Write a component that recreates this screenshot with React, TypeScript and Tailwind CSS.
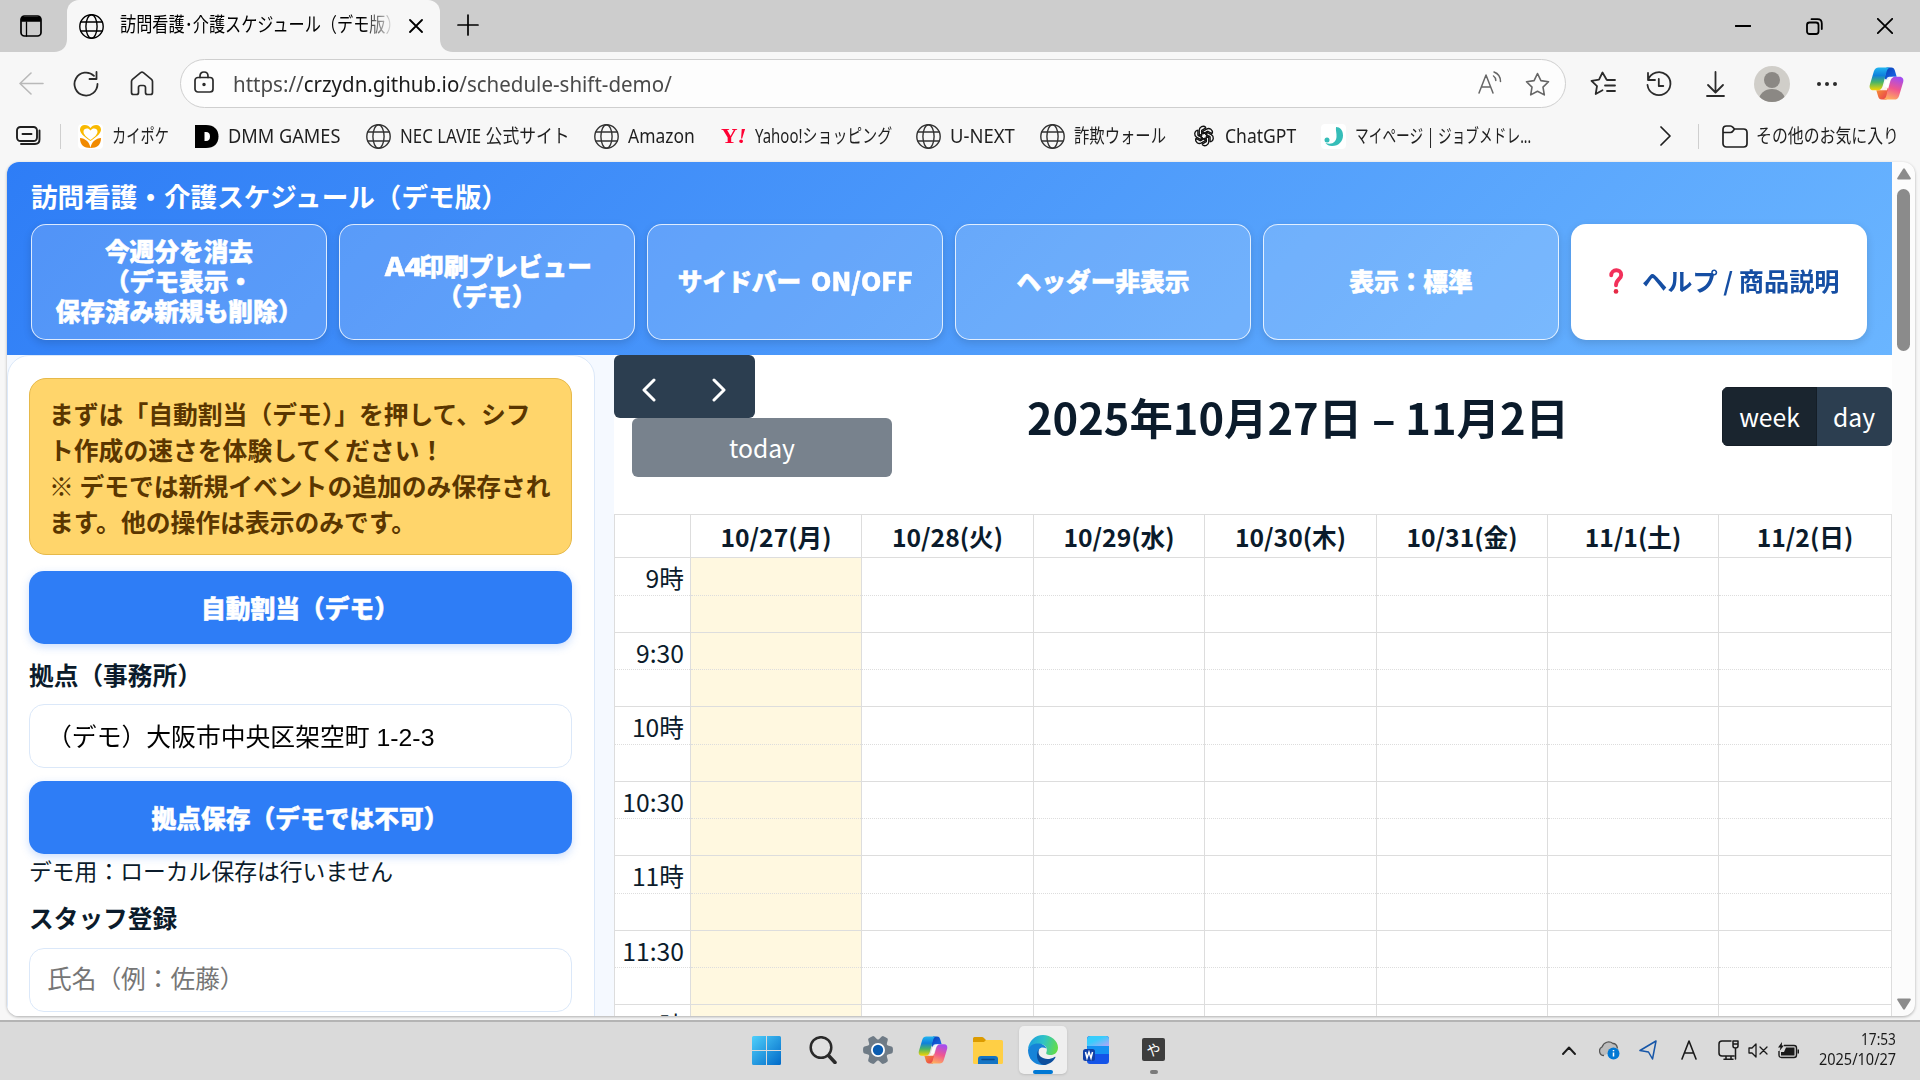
import { useLayoutEffect, useRef } from "react";
import type { ReactNode } from "react";

/** Text stretched or condensed horizontally to a given width. */
function Fit({ w, className = "", children }: { w: number; className?: string; children: ReactNode }) {
  const ref = useRef<HTMLSpanElement>(null);
  useLayoutEffect(() => {
    const el = ref.current;
    if (el) el.style.transform = `scaleX(${w / el.offsetWidth})`;
  }, [w]);
  return (
    <span className={`block shrink-0 ${className}`} style={{ width: w }}>
      <span ref={ref} className="inline-block origin-left whitespace-nowrap">
        {children}
      </span>
    </span>
  );
}

const stroke = { fill: "none", stroke: "currentColor", strokeLinecap: "round", strokeLinejoin: "round" } as const;

function Globe({ className = "size-[25px]" }: { className?: string }) {
  return (
    <svg viewBox="0 0 25 25" className={`shrink-0 text-[#333] ${className}`} {...stroke} strokeWidth={1.4}>
      <circle cx="12.5" cy="12.5" r="11.7" />
      <ellipse cx="12.5" cy="12.5" rx="5.6" ry="11.7" />
      <path d="M1.8 8h21.4M1.8 17h21.4" />
    </svg>
  );
}

function Copilot({ className, id }: { className: string; id: string }) {
  return (
    <svg viewBox="0 0 36 34" className={`shrink-0 ${className}`}>
      <defs>
        <linearGradient id={`${id}a`} x1="0" y1="0" x2="0" y2="1">
          <stop offset="0" stopColor="#21b5f0" />
          <stop offset=".35" stopColor="#0f80dc" />
          <stop offset=".65" stopColor="#4bb565" />
          <stop offset="1" stopColor="#f8d500" />
        </linearGradient>
        <linearGradient id={`${id}b`} x1=".6" y1="0" x2=".3" y2="1">
          <stop offset="0" stopColor="#a44cf0" />
          <stop offset=".5" stopColor="#f0568f" />
          <stop offset="1" stopColor="#ffb15c" />
        </linearGradient>
        <linearGradient id={`${id}c`} x1="0" y1="0" x2="1" y2="1">
          <stop offset="0" stopColor="#0a3fb5" />
          <stop offset="1" stopColor="#1b6ef0" />
        </linearGradient>
        <linearGradient id={`${id}d`} x1="0" y1="0" x2="1" y2="1">
          <stop offset="0" stopColor="#f7a032" />
          <stop offset="1" stopColor="#e8364f" />
        </linearGradient>
      </defs>
      <path d="M18 .5h5c2 0 3 1 3.600 3l1.900 6.500H25c-3 0-4.500 1.500-5.300 4L16 12z" fill={`url(#${id}c)`} />
      <path d="M18 33.500h-5c-2 0-3-1-3.600-3L7.500 24H11c3 0 4.500-1.500 5.300-4l3.700 2z" fill={`url(#${id}d)`} />
      <path d="M10 .5h12.500c-2 0-3.600 1.500-4.300 4l-4 14.500c-.8 3.300-2.500 5-5.500 5H4.500C1.500 24 0 21.500.8 18.500L5 4.500C5.800 1.800 7.500.5 10 .5z" fill={`url(#${id}a)`} />
      <path d="M26 33.500H13.500c2 0 3.600-1.500 4.300-4l4-14.500c.8-3.300 2.500-5 5.500-5h4.200c3 0 4.500 2.500 3.700 5.500L31 29.500c-.8 2.700-2.500 4-5 4z" fill={`url(#${id}b)`} />
      <path d="M21 10h5.500c-3 0-4.500 2-5.300 5l-2.700 9H11.500c2.500-.5 3.500-2 4.200-4.500l2-6.500c.6-2 1.500-3 3.300-3z" fill="#fff" fillOpacity=".9" />
    </svg>
  );
}

function TitleBar() {
  return (
    <div className="flex h-[52px] items-center bg-[#cdcdcd] text-black">
      <svg viewBox="0 0 22 22" className="ml-5 size-[22px] shrink-0" {...stroke} strokeWidth={1.7}>
        <rect x="1" y="1" width="20" height="20" rx="3.500" />
        <path d="M2 2.500h18v3.500h-18z" fill="currentColor" />
        <path d="M6.500 7v14" strokeWidth={1.300} />
      </svg>
      <svg viewBox="0 0 13 13" className="ml-[12px] size-[13px] shrink-0 self-end">
        <path d="M13 0v13H0C8 13 13 8 13 0z" fill="#f7f7f7" />
      </svg>
      <div className="flex h-[52px] w-[373px] shrink-0 items-center rounded-t-[12px] bg-[#f7f7f7] pl-3">
        <Globe className="size-[25px] text-black" />
        <div className="ml-4 w-[275px] overflow-hidden pb-0.5 [mask-image:linear-gradient(to_right,black_88%,transparent)]">
          <Fit w={282} className="text-[20px] leading-[30px]">訪問看護･介護スケジュール（デモ版）</Fit>
        </div>
        <svg viewBox="0 0 14 14" className="ml-[14px] size-[14px]" {...stroke} strokeWidth={1.8}>
          <path d="M1 1l12 12M13 1L1 13" />
        </svg>
      </div>
      <svg viewBox="0 0 13 13" className="size-[13px] shrink-0 self-end">
        <path d="M0 0v13h13C5 13 0 8 0 0z" fill="#f7f7f7" />
      </svg>
      <svg viewBox="0 0 22 22" className="mb-[3px] ml-[4px] size-[22px]" {...stroke} strokeWidth={1.7}>
        <path d="M11 1v20M1 11h20" />
      </svg>
      <div className="ml-auto flex items-center pr-[27px]">
        <svg viewBox="0 0 16 16" className="mr-[55px] size-4" {...stroke} strokeWidth={1.8}>
          <path d="M.5 8h15" />
        </svg>
        <svg viewBox="0 0 17 17" className="mr-[54px] size-[17px]" {...stroke} strokeWidth={1.8}>
          <rect x="1" y="4.500" width="11.500" height="11.500" rx="2.500" />
          <path d="M5.500 1.200h6c3 0 4.300 1.500 4.300 4.300v5.500" />
        </svg>
        <svg viewBox="0 0 16 16" className="size-4" {...stroke} strokeWidth={1.8}>
          <path d="M.8.8l14.400 14.400M15.200.8L.8 15.200" />
        </svg>
      </div>
    </div>
  );
}

const starPath = "M12.500 1.500l3.400 7.100 7.600 1.100-5.500 5.400 1.300 7.800-6.800-3.700-6.800 3.700L7 15.100 1.500 9.700l7.600-1.100z";

function Toolbar() {
  return (
    <div className="flex h-[63px] items-center bg-[#f7f7f7] text-[#2b2b2b]">
      <svg viewBox="0 0 25 23" className="ml-[19px] h-[23px] w-[25px] shrink-0 text-[#b9b9b9]" {...stroke} strokeWidth={1.6}>
        <path d="M24 11.500H1M12 1L1 11.500 12 22" />
      </svg>
      <svg viewBox="0 0 26 26" className="ml-[29px] size-[26px] shrink-0" {...stroke} strokeWidth={1.8}>
        <path d="M24.500 13A11.500 11.500 0 1 1 21 4.800M23.500 1v7h-7" />
      </svg>
      <svg viewBox="0 0 24 25" className="ml-[31px] h-[25px] w-6 shrink-0" {...stroke} strokeWidth={1.7}>
        <path d="M1.500 10.500c0-1 .3-1.600 1-2.200L10.600 1.700c.9-.7 1.900-.7 2.800 0l8.100 6.600c.7.600 1 1.200 1 2.200v11c0 1.200-.8 2-2 2h-3c-1.200 0-2-.8-2-2v-5c0-1.200-.8-2-2-2h-3c-1.200 0-2 .8-2 2v5c0 1.200-.8 2-2 2h-3c-1.200 0-2-.8-2-2z" />
      </svg>
      <div className="ml-[26px] flex h-[49px] w-[1386px] shrink-0 items-center rounded-full border-[1.500px] border-[#cfcfcf] bg-[#fdfdfd]">
        <svg viewBox="0 0 20 22" className="mb-[3px] ml-[13px] h-[22px] w-5 shrink-0" {...stroke} strokeWidth={1.7}>
          <rect x="1" y="6.500" width="18" height="14.500" rx="3" />
          <path d="M6 6.500V5c0-2.600 1.500-4 4-4s4 1.400 4 4v1.500" />
          <circle cx="10" cy="13.500" r=".9" fill="currentColor" />
        </svg>
        <Fit w={439} className="mb-0.5 ml-[19px] text-[22px] leading-[30px] text-[#4a4a4a]">
          https://<span className="text-[#1b1b1b]">crzydn.github.io</span>/schedule-shift-demo/
        </Fit>
        <svg viewBox="0 0 24 23" className="mb-[3px] ml-auto h-[23px] w-6 shrink-0 text-[#666]" {...stroke} strokeWidth={1.5}>
          <path d="M1 22L8 4l7 18M3.500 16h9M15.500 5c1.500 1 2.300 2.500 2.300 4.500M16 1c4 1.500 6.500 5 6.500 9.500" />
        </svg>
        <svg viewBox="0 0 25 24" className="mr-[15px] ml-[23px] h-6 w-[25px] shrink-0 text-[#666]" {...stroke} strokeWidth={1.6}>
          <path d={starPath} />
        </svg>
      </div>
      <svg viewBox="0 0 26 25" className="ml-6 h-[25px] w-[26px] shrink-0" {...stroke} strokeWidth={1.8}>
        <path d="M16.500 8.500L12.500 1.500 9 8.700 1.500 9.800 7 15.100 5.700 23l6.800-3.700M17 9h8M15 14.500h10M17 20h8" />
      </svg>
      <svg viewBox="0 0 26 26" className="ml-[30px] size-[26px] shrink-0" {...stroke} strokeWidth={1.8}>
        <path d="M2 9A11.500 11.500 0 1 1 1.500 14M2 2v7h7M12.800 8v7h4.500" />
      </svg>
      <svg viewBox="0 0 19 26" className="ml-[34px] h-[26px] w-[19px] shrink-0" {...stroke} strokeWidth={1.8}>
        <path d="M9.500 1v20M2 14l7.500 7.500L17 14M1 25h17" />
      </svg>
      <svg viewBox="0 0 36 36" className="ml-[29px] size-9 shrink-0">
        <clipPath id="avatar"><circle cx="18" cy="18" r="18" /></clipPath>
        <g clipPath="url(#avatar)">
          <path d="M0 0h36v36H0z" fill="#d0cec9" />
          <circle cx="18" cy="14" r="8" fill="#8b8884" />
          <ellipse cx="18" cy="34" rx="13" ry="11" fill="#8b8884" />
        </g>
      </svg>
      <svg viewBox="0 0 22 6" className="ml-[26px] h-1.5 w-[22px] shrink-0" fill="currentColor">
        <circle cx="3" cy="3" r="2" /><circle cx="11" cy="3" r="2" /><circle cx="19" cy="3" r="2" />
      </svg>
      <Copilot id="bar" className="ml-[31px] h-[33px] w-[35px]" />
    </div>
  );
}

function Bookmark({ w, tw, icon, label }: { w: number; tw: number; icon: ReactNode; label: string }) {
  return (
    <div className="flex shrink-0 items-center" style={{ width: w }}>
      <div className="flex w-[25px] shrink-0 items-center justify-center">{icon}</div>
      <Fit w={tw} className="ml-[9px] text-[19px] leading-[28px]">{label}</Fit>
    </div>
  );
}

const kaipoke = (
  <svg viewBox="0 0 25 25" className="size-[25px] rounded bg-white">
    <path d="M12.500 17C5 12 2 9 2 5.500 2 3 4 1 6.800 1c2.500 0 4.500 1 5.700 3C13.700 2 15.700 1 18.200 1 21 1 23 3 23 5.500c0 3.500-3 6.500-10.500 11.500z" fill="#f9b900" />
    <path d="M12.500 16C7.500 12.500 5.500 10 5.500 7.500c0-3.400 5-4.300 7-1 2-3.300 7-2.400 7 1 0 2.500-2 5-7 8.500z" fill="#fff" />
    <path d="M2 14c5 .5 9.500 3.500 10.500 10C6 24 2 21 2 14zM23 14c-5 .5-9.500 3.500-10.500 10C19 24 23 21 23 14z" fill="#f18a00" />
  </svg>
);
const dmm = (
  <svg viewBox="0 0 24 23" className="h-[23px] w-6">
    <path d="M0 0h11c8 0 12.500 4.500 12.500 11.500S19 23 11 23H0z" fill="#000" />
    <path d="M9.500 7h1.500c2.800 0 4 1.700 4 4.500S13.800 16 11 16H9.500z" fill="#fff" />
  </svg>
);
const yahoo = (
  <Fit w={25} className="font-['Liberation_Serif',serif] text-[22px] leading-[22px] font-bold text-[#ff0033]">
    Y<i>!</i>
  </Fit>
);
const chatgpt = (
  <svg viewBox="0 0 24 24" className="size-[22px]" fill="none" stroke="#111" strokeWidth={1.5}>
    {[0, 60, 120, 180, 240, 300].map((a) => (
      <path key={a} transform={`rotate(${a} 12 12)`} d="M12 8.500L6.800 11.500V5.800A4.300 4.300 0 0 1 14 2.600M14.500 2.900L9.500 5.800v6" />
    ))}
  </svg>
);
const jobmed = (
  <svg viewBox="0 0 25 25" className="size-[25px] rounded bg-white">
    <path d="M15 3c4 0 7 3 7 8.500S18 22 11 22c-3 0-5-1-6.500-3 7 2 10.500-1 11-6 .3-4-1-7-.5-10z" fill="#35bdb8" />
    <circle cx="6" cy="16" r="2.500" fill="#35bdb8" />
  </svg>
);

function Bookmarks() {
  return (
    <div className="flex h-[47px] items-center bg-[#f7f7f7] pb-[5px] text-[#1f1f1f]">
      <svg viewBox="0 0 25 20" className="ml-4 h-5 w-[25px] shrink-0" {...stroke} strokeWidth={1.900}>
        <rect x="1" y="1" width="20" height="14" rx="3.500" />
        <path d="M6.500 8h9M23.500 4.500v9c0 3-1.500 4.500-4.500 4.500H5" />
      </svg>
      <div className="ml-[19px] h-[25px] w-px shrink-0 bg-[#cfcfcf]" />
      <div className="ml-[17px] flex">
        <Bookmark w={116} tw={57} icon={kaipoke} label="カイポケ" />
        <Bookmark w={172} tw={112} icon={dmm} label="DMM GAMES" />
        <Bookmark w={228} tw={170} icon={<Globe />} label="NEC LAVIE 公式サイト" />
        <Bookmark w={127} tw={67} icon={<Globe />} label="Amazon" />
        <Bookmark w={195} tw={137} icon={yahoo} label="Yahoo!ショッピング" />
        <Bookmark w={124} tw={65} icon={<Globe />} label="U-NEXT" />
        <Bookmark w={151} tw={92} icon={<Globe />} label="詐欺ウォール" />
        <Bookmark w={130} tw={71} icon={chatgpt} label="ChatGPT" />
        <Bookmark w={240} tw={176} icon={jobmed} label="マイページ | ジョブメドレ..." />
      </div>
      <svg viewBox="0 0 11 20" className="ml-auto h-5 w-[11px] shrink-0" {...stroke} strokeWidth={1.700}>
        <path d="M1 1l9 9-9 9" />
      </svg>
      <div className="ml-[27px] h-[25px] w-px bg-[#cfcfcf]" />
      <svg viewBox="0 0 26 23" className="ml-[23px] h-[23px] w-[26px] shrink-0" {...stroke} strokeWidth={1.700}>
        <path d="M1 7V4.500C1 2.500 2.200 1 4.500 1h4c1 0 1.600.4 2.200 1.200L12.500 4h9C24 4 25 5.500 25 7.500v11c0 2-1.200 3.500-3.500 3.500h-17C2.200 22 1 20.500 1 18.500zM1 7.500h7.500c1 0 1.700-.3 2.300-1.200L12.500 4" />
      </svg>
      <Fit w={143} className="mr-[21px] ml-[8px] text-[19px] leading-[28px]">その他のお気に入り</Fit>
    </div>
  );
}

const glassButton =
  "flex w-[296px] flex-col items-center justify-center rounded-[15px] border border-white/80 bg-white/[0.16] pb-[4px] text-center text-[24.700px] leading-[30px] text-white shadow-[0_3px_8px_rgba(0,0,0,0.14)] font-black [-webkit-text-stroke:0.5px_white]";

function AppHeader() {
  return (
    <div className="h-[193px] shrink-0 bg-[linear-gradient(135deg,#2e7df6,#6ab5ff)] px-6 pt-[15px]">
      <div className="h-[47px] text-[26.600px] leading-[38px] font-bold text-white">訪問看護・介護スケジュール（デモ版）</div>
      <div className="flex h-[116px] gap-3">
        <div className={glassButton}>
          <span>今週分を消去</span><span>（デモ表示・</span><span>保存済み新規も削除）</span>
        </div>
        <div className={glassButton}>
          <div className="flex"><Fit w={37}>A4</Fit>印刷プレビュー</div>
          <span>（デモ）</span>
        </div>
        <div className={glassButton}>
          <div className="flex pr-[2px]">サイドバー<Fit w={102} className="ml-[7px]">ON/OFF</Fit></div>
        </div>
        <div className={glassButton}>ヘッダー非表示</div>
        <div className={glassButton}>表示：標準</div>
        <div className="flex w-[296px] items-center rounded-[15px] bg-white pb-[3px] pl-[37px] text-[24.700px] font-bold text-[#154ea3] shadow-[0_3px_8px_rgba(0,0,0,0.14)]">
          <svg viewBox="0 0 16 30" className="mr-[18px] h-[26px] w-4">
            <path d="M2.500 8.500C2.500 1 14 .5 14 8c0 5-6 5-6 12" fill="none" stroke="#f2305a" strokeWidth={4.500} strokeLinecap="round" />
            <circle cx="8" cy="27" r="2.700" fill="#e52a45" />
          </svg>
          <Fit w={198}>ヘルプ / 商品説明</Fit>
        </div>
      </div>
    </div>
  );
}

const blueButton =
  "flex h-[73px] shrink-0 items-center justify-center rounded-[15px] bg-[#2e7df6] pr-[1px] text-[24.750px] text-white shadow-[0_3px_8px_rgba(46,125,246,0.25)] font-black [-webkit-text-stroke:0.5px_white]";
const field =
  "flex h-[64px] shrink-0 items-center rounded-[15px] border border-[#dbe8f9] bg-white px-[17px] font-['Liberation_Sans','Noto_Sans_CJK_JP',sans-serif] text-[24.700px]";

function Sidebar() {
  return (
    <div className="h-[720px] w-[588px] shrink-0 rounded-t-[22px] border border-[#dbe8f9] bg-white pt-[22px] pr-[22px] pl-[21px]">
      <div className="flex h-full flex-col">
        <div className="h-[177px] shrink-0 rounded-[17px] border border-[#e6b94a] bg-[#ffd56b] pt-[16px] pl-[19px] text-[24.800px] leading-[36px] font-bold whitespace-nowrap text-[#5a3600]">
          <div>まずは「自動割当（デモ）」を押して、シフ</div>
          <div>ト作成の速さを体験してください！</div>
          <div>※ デモでは新規イベントの追加のみ保存され</div>
          <div>ます。他の操作は表示のみです。</div>
        </div>
        <div className={`mt-4 ${blueButton}`}>自動割当（デモ）</div>
        <div className="mt-[12px] text-[24.700px] leading-[36px] font-bold">拠点（事務所）</div>
        <div className={`mt-[12px] pt-[3px] text-black ${field}`}>
          <Fit w={387}>（デモ）大阪市中央区架空町 1-2-3</Fit>
        </div>
        <div className={`mt-[13px] ${blueButton}`}>拠点保存（デモでは不可）</div>
        <div className="text-[22.800px] leading-[34px]">デモ用：ローカル保存は行いません</div>
        <div className="mt-[11px] text-[24.700px] leading-[36px] font-bold">スタッフ登録</div>
        <div className={`mt-[13px] text-[#767676] ${field}`}>氏名（例：佐藤）</div>
      </div>
    </div>
  );
}

const days = ["10/27(月)", "10/28(火)", "10/29(水)", "10/30(木)", "10/31(金)", "11/1(土)", "11/2(日)"];
const times = ["9時", "9:30", "10時", "10:30", "11時", "11:30", "12時"];
const cols = "grid grid-cols-[77px_171px_172px_171px_172px_171px_171px_173px]";

function Calendar() {
  return (
    <div className="w-[1278px] shrink-0 overflow-hidden bg-white">
      <div className="flex h-[159px] items-start justify-between">
        <div className="w-[278px]">
          <div className="flex h-[63px] w-[141px] items-center rounded-[6px] bg-[#2c3e50] pt-[6px] pl-[28px] text-white">
            <svg viewBox="0 0 14 24" className="h-6 w-[14px]" {...stroke} strokeWidth={3}><path d="M12 2L2 12l10 10" /></svg>
            <svg viewBox="0 0 14 24" className="ml-[56px] h-6 w-[14px]" {...stroke} strokeWidth={3}><path d="M2 2l10 10L2 22" /></svg>
          </div>
          <div className="ml-[18px] flex h-[59px] w-[260px] items-center justify-center rounded-[6px] bg-[#78828d] text-[24.700px] text-white">today</div>
        </div>
        <Fit w={542} className="mt-[29px] ml-[-19px] text-[43px] leading-[64px] font-bold">2025年10月27日 – 11月2日</Fit>
        <div className="mt-8 flex h-[59px] overflow-hidden rounded-[6px] text-[24.700px] text-white">
          <div className="flex w-[95px] items-center justify-center border border-[#151e27] bg-[#1a252f]">week</div>
          <div className="flex w-[75px] items-center justify-center bg-[#2c3e50] pr-[1px]">day</div>
        </div>
      </div>
      <div className="border-t border-[#dddddd]">
        <div className={`h-[43px] border-b border-[#dddddd] ${cols}`}>
          <div className="border-x border-[#dddddd]" />
          {days.map((d) => (
            <div key={d} className="border-r border-[#dddddd] pt-[2px] text-center text-[24.700px] leading-[38px] font-bold">{d}</div>
          ))}
        </div>
        {times.map((t) => (
          <div key={t} className={`h-[74.500px] ${cols}`}>
            <div className="flex flex-col border-x border-[#dddddd]">
              <div className="h-[37.500px] border-b border-dotted border-[#dddddd] pr-[6px] text-right text-[24.700px] leading-[38px] whitespace-nowrap">{t}</div>
              <div className="flex-1 border-b border-[#dddddd]" />
            </div>
            {days.map((d, i) => (
              <div key={d} className={`flex flex-col border-r border-[#dddddd] ${i === 0 ? "bg-[#fff8e0]" : ""}`}>
                <div className="h-[37.500px] border-b border-dotted border-[#dddddd]" />
                <div className="flex-1 border-b border-[#dddddd]" />
              </div>
            ))}
          </div>
        ))}
      </div>
    </div>
  );
}

function Taskbar() {
  return (
    <div className="flex h-[60px] shrink-0 items-center border-t-2 border-[#b4b4b4] bg-[#dadada] pb-[2px] text-[#1a1a1a]">
      <svg viewBox="0 0 29 29" className="ml-[752px] size-[29px] shrink-0">
        <defs>
          <linearGradient id="win" x1="0" y1="0" x2="29" y2="29" gradientUnits="userSpaceOnUse">
            <stop offset="0" stopColor="#4fd0fb" /><stop offset="1" stopColor="#0069c8" />
          </linearGradient>
        </defs>
        <path d="M0 1.500Q0 0 1.500 0H14v14H0zM15 0h12.500Q29 0 29 1.500V14H15zM0 15h14v14H1.500Q0 29 0 27.500zM15 15h14v12.500Q29 29 27.500 29H15z" fill="url(#win)" />
      </svg>
      <svg viewBox="0 0 28 28" className="ml-7 size-7 shrink-0" fill="none" stroke="#2a2a2a" strokeLinecap="round">
        <circle cx="12" cy="11.500" r="10.300" fill="#e6e6e6" fillOpacity=".5" strokeWidth={2.500} />
        <path d="M20 20l6 6.500" strokeWidth={3.500} />
      </svg>
      <svg viewBox="-15 -15 30 30" className="ml-[26px] size-[30px] shrink-0">
        <g fill="#6f7b86">
          {[0, 60, 120, 180, 240, 300].map((a) => (
            <path key={a} transform={`rotate(${a + 30})`} d="M-5-8l1.500-5.500q.3-1 1.300-1.200 2.200-.5 4.400 0 1 .2 1.300 1.200L5-8z" />
          ))}
          <circle r="10.500" />
        </g>
        <circle r="7" fill="#fff" />
        <circle r="5.200" fill="#0a5cb0" />
      </svg>
      <Copilot id="task" className="ml-[25px] h-[28px] w-[30px]" />
      <svg viewBox="0 0 30 28" className="ml-[25px] h-7 w-[30px] shrink-0">
        <path d="M0 2.500Q0 1 1.500 1H9q1 0 1.700.8L13 4v6H0z" fill="#dc9b00" />
        <path d="M0 6h11l2-2h15.500Q30 4 30 5.500v21q0 1.500-1.500 1.500h-27Q0 28 0 26.500z" fill="#ffcf45" />
        <path d="M5 28v-5q0-3 3-3h14q3 0 3 3v5z" fill="#1474c4" />
        <path d="M9 23.500h12" stroke="#0a4a8a" strokeWidth={1.500} strokeLinecap="round" />
      </svg>
      <div className="ml-4 flex h-12 w-12 shrink-0 flex-col items-center rounded-[5px] bg-[#efefef] pt-[9px] shadow-sm">
        <svg viewBox="0 0 30 30" className="size-[30px]">
          <defs>
            <linearGradient id="edge" x1="0" y1=".3" x2="1" y2=".5">
              <stop offset="0" stopColor="#1b9de2" /><stop offset=".5" stopColor="#2fc3c5" /><stop offset="1" stopColor="#63dc4a" />
            </linearGradient>
          </defs>
          <path d="M0 14C1 6 7 0 15 0s15 6 15 12.500c0 5-3.500 7.500-7.500 7.500-3.500 0-5-1-4-3C20 13 17 9 12 9 6 9 1.500 12 0 14z" fill="url(#edge)" />
          <path d="M0 15C1 11 5 8.500 10 8.500c4 0 7.500 2 8.500 5-6-3-9 1-8.500 6 .5 5 4 9 8.500 10C8 32 0 25 0 15z" fill="#1683d8" />
          <path d="M12 13c-2 2-2 6 .5 8.500 3.500 3 9 3.500 14 .5.800-.4 1.200 0 .8.700C25 27 20 30 15.500 30 8 28 7 17 12 13z" fill="#0d4f9e" />
        </svg>
        <div className="mt-[5px] h-1 w-5 rounded-full bg-[#0078d4]" />
      </div>
      <svg viewBox="0 0 27 29" className="ml-4 h-[29px] w-[27px] shrink-0">
        <defs>
          <linearGradient id="wordTop" x1="0" y1="0" x2="1" y2="1">
            <stop offset=".4" stopColor="#38cdfc" /><stop offset="1" stopColor="#b7a4f5" />
          </linearGradient>
        </defs>
        <rect x="4" y="0" width="22" height="28" rx="3" fill="#1454e8" />
        <path d="M4 12Q4 9 7 9h19v9H4z" fill="#1592f2" />
        <path d="M7.500 0H23q3 0 3 3v7H4V3.500Q4 0 7.500 0z" fill="url(#wordTop)" />
        <rect x="0" y="13" width="12" height="12" rx="2.500" fill="#1040a8" />
        <path d="M2.500 16l1.500 6 2-6 2 6 1.500-6" fill="none" stroke="#fff" strokeWidth={1.500} />
      </svg>
      <div className="ml-8 flex w-[23px] shrink-0 flex-col items-center pt-[12px]">
        <div className="flex size-[23px] items-center justify-center rounded-[2px] bg-[#3d3d3d] text-[14px] leading-none text-white">や</div>
        <div className="mt-[9px] h-1 w-2 rounded-full bg-[#7a7a7a]" />
      </div>
      <div className="ml-auto flex shrink-0 items-center">
        <svg viewBox="0 0 14 9" className="h-[9px] w-[14px]" {...stroke} strokeWidth={1.900}><path d="M1 8l6-6.500L13 8" /></svg>
        <svg viewBox="0 0 21 19" className="ml-[23px] h-[19px] w-[21px]">
          <path d="M5 14.500A4.500 4.500 0 0 1 3 6C5 1 10-.5 14 2.500c2 0 4 2 4.500 5" fill="#bdbdbd" stroke="#555" strokeWidth={1.300} />
          <circle cx="14.500" cy="12.500" r="6" fill="#0078d4" />
          <path d="M14.500 11.500v4M14.500 9v1.300" stroke="#fff" strokeWidth={1.500} />
        </svg>
        <svg viewBox="0 0 18 20" className="ml-[19px] h-5 w-[18px] text-[#1656a8]" {...stroke} strokeWidth={1.500}>
          <path d="M17 1L1 10.500l8.500 1.500 4 7z" />
        </svg>
        <svg viewBox="0 0 16 20" className="ml-6 h-5 w-4" {...stroke} strokeWidth={1.600}><path d="M1 19L8 1l7 18M3.500 13h9" /></svg>
        <svg viewBox="0 0 21 20" className="ml-[21px] h-5 w-[21px]" {...stroke} strokeWidth={1.500}>
          <path d="M13 1H4Q1 1 1 4v9q0 3 3 3h12M6 19.200h9M8 16v3M13 16v3M15 1h5v5q0 2-2.500 2T15 6zM15 4h5M17.500 8v11" />
        </svg>
        <svg viewBox="0 0 20 15" className="ml-[9px] h-[15px] w-5" {...stroke} strokeWidth={1.300}>
          <path d="M1 5v5h3l4 4V1L4 5zM12 4l7 7M19 4l-7 7" />
        </svg>
        <svg viewBox="0 0 21 17" className="ml-[10px] h-[17px] w-[21px]">
          <path d="M6 3.500h10q2.500 0 2.500 2.500v7q0 2.500-2.500 2.500H3.500Q1 15.500 1 13V9" fill="none" stroke="#1a1a1a" strokeWidth={1.400} />
          <path d="M8 5.500h8.500v8H3V10h3zM19.500 7.500h1.500v4h-1.500zM4 0L0 5.500h2.500L1.500 9 6 3.500H3.800z" fill="#1a1a1a" />
        </svg>
        <div className="mr-6 flex w-[97px] flex-col items-end pb-[2px] text-[16px] leading-[20px]">
          <Fit w={35}>17:53</Fit>
          <Fit w={77}>2025/10/27</Fit>
        </div>
      </div>
    </div>
  );
}

export default function App() {
  return (
    <div className="flex h-[1080px] w-[1920px] flex-col overflow-hidden bg-[#f7f7f7] font-['Noto_Sans','Noto_Sans_CJK_JP',sans-serif]">
      <TitleBar />
      <Toolbar />
      <Bookmarks />
      <div className="ml-[7px] flex h-[854px] w-[1908px] shrink-0 overflow-hidden rounded-[12px] bg-[#fcfcfc] font-['Noto_Sans_CJK_JP',sans-serif] text-[#0b1b2b] shadow-[0_1px_3px_rgba(0,0,0,0.3)]">
        <div className="flex w-[1885px] shrink-0 flex-col overflow-hidden bg-[#f5f9ff]">
          <AppHeader />
          <div className="flex h-[661px] justify-between overflow-hidden">
            <Sidebar />
            <Calendar />
          </div>
        </div>
        <div className="flex flex-1 flex-col items-center">
          <svg viewBox="0 0 14 12" className="mt-[6px] h-3 w-[14px]" fill="#8b8b8b"><path d="M6 1q1-1.500 2 0l5.700 9q.6 1.500-1 1.500H1.300q-1.600 0-1-1.500z" /></svg>
          <div className="mt-[9px] h-[162px] w-[13px] rounded-full bg-[#8b8b8b]" />
          <svg viewBox="0 0 14 12" className="mt-auto mb-[6px] h-3 w-[14px] rotate-180" fill="#8b8b8b"><path d="M6 1q1-1.500 2 0l5.700 9q.6 1.500-1 1.500H1.300q-1.600 0-1-1.500z" /></svg>
        </div>
      </div>
      <div className="h-1 shrink-0" />
      <Taskbar />
    </div>
  );
}
